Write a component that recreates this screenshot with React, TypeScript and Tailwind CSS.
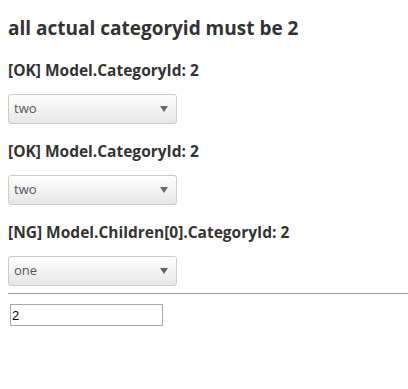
const font = { fontFamily: '"Open Sans", "Noto Sans", sans-serif' };

function FakeSelect({ value }: { value: string }) {
  return (
    <div className="flex h-[30px] w-[169px] items-center justify-between rounded-[3px] border border-[#cccccc] bg-gradient-to-b from-[#ffffff] to-[#e6e6e6] pl-[5px] pr-[8px] text-[13px] text-[#555555]">
      <span>{value}</span>
      <svg width="8" height="6" viewBox="0 0 8 6">
        <path d="M0 0 H8 L4 6 Z" fill="#666666" />
      </svg>
    </div>
  );
}

const rows = [
  { label: "[OK] Model.CategoryId: 2", value: "two" },
  { label: "[OK] Model.CategoryId: 2", value: "two" },
  { label: "[NG] Model.Children[0].CategoryId: 2", value: "one" },
];

export default function App() {
  return (
    <div className="min-h-[389px] bg-white p-2 text-[#333333]" style={font}>
      <h2 className="mt-2 text-[19px] font-bold leading-6">all actual categoryid must be 2</h2>
      {rows.map((r, i) => (
        <div key={i} className={i === 0 ? "mt-5" : "mt-[17px]"}>
          <div className="text-[15.5px] font-bold leading-5">{r.label}</div>
          <div className="mt-[14px]">
            <FakeSelect value={r.value} />
          </div>
        </div>
      ))}
      <div className="mr-[-8px] mt-[7px] border-t border-[#999999]" />
      <input
        className="ml-[2px] mt-[10px] h-[22px] w-[153px] border border-[#a9a9a9] px-[1px] text-[13px] text-black outline-none"
        style={{ fontFamily: '"Liberation Sans", Arial, sans-serif' }}
        defaultValue="2"
      />
    </div>
  );
}
